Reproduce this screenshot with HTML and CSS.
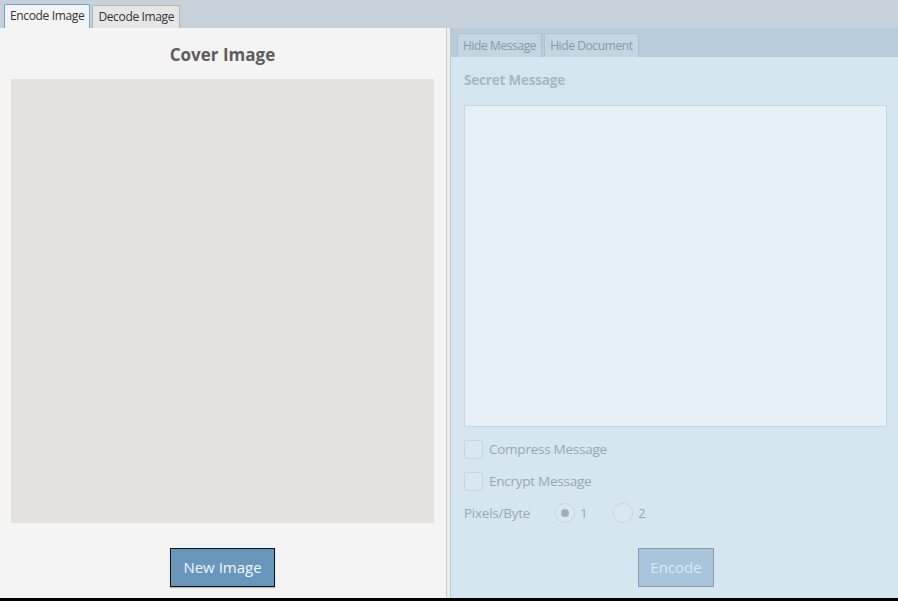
FILE: index.html
```html
<!DOCTYPE html>
<html>
<head>
<meta charset="utf-8">
<link rel="stylesheet" href="styles.css">
</head>
<body>
<div class="app">
  <div class="tabbar">
    <div class="tab tab-active">Encode Image</div>
    <div class="tab">Decode Image</div>
  </div>
  <div class="content">
    <div class="left">
      <div class="title">Cover Image</div>
      <div class="image-area"></div>
      <div class="btn-row">
        <div class="btn btn-primary">New Image</div>
      </div>
    </div>
    <div class="divider"></div>
    <div class="right">
      <div class="subtabbar">
        <div class="subtab">Hide Message</div>
        <div class="subtab">Hide Document</div>
      </div>
      <div class="right-body">
        <div class="label-bold">Secret Message</div>
        <div class="textarea"></div>
        <div class="check-row"><span class="checkbox"></span><span class="muted">Compress Message</span></div>
        <div class="check-row"><span class="checkbox"></span><span class="muted">Encrypt Message</span></div>
        <div class="radio-row">
          <span class="muted pb">Pixels/Byte</span>
          <span class="radio radio-on"><span class="dot"></span></span><span class="muted rlabel">1</span>
          <span class="radio"></span><span class="muted rlabel">2</span>
        </div>
        <div class="btn-row">
          <div class="btn btn-disabled">Encode</div>
        </div>
      </div>
    </div>
  </div>
</div>
</body>
</html>
```

FILE: styles.css
```css
html, body {
  margin: 0;
  padding: 0;
}
body {
  background: #000;
  width: 898px;
  height: 601px;
  overflow: hidden;
  font-family: "Open Sans", "Noto Sans", sans-serif;
}
.app {
  height: 598px;
  display: flex;
  flex-direction: column;
}
.tabbar {
  height: 28px;
  background: #c6d1da;
  display: flex;
  align-items: flex-end;
  padding-left: 4px;
  gap: 2px;
  box-sizing: border-box;
}
.tab {
  height: 23px;
  box-sizing: border-box;
  padding: 0 5px;
  font-size: 12px;
  line-height: 22px;
  color: #333;
  background: #e6e6e6;
  border: 1px solid #b5b5b5;
  border-bottom: none;
  border-radius: 2px 2px 0 0;
  letter-spacing: -0.35px;
}
.tab-active {
  background: #f4f4f4;
  border-color: #5fa7d6;
  height: 24px;
}
.content {
  flex: 1;
  display: flex;
  min-height: 0;
}
.left {
  width: 446px;
  background: #f4f4f4;
  display: flex;
  flex-direction: column;
  padding: 0 12px 11px 11px;
  box-sizing: border-box;
}
.title {
  height: 51px;
  line-height: 53px;
  text-align: center;
  font-weight: bold;
  font-size: 17px;
  color: #5e5e5e;
}
.image-area {
  height: 444px;
  background: #e3e2de;
}
.btn-row {
  display: flex;
  justify-content: center;
  margin-top: 25px;
}
.btn {
  height: 39px;
  box-sizing: border-box;
  font-size: 15px;
  line-height: 37px;
  text-align: center;
}
.btn-primary {
  width: 105px;
  background: #6897bb;
  border: 1px solid #111;
  color: #f2f6fa;
  box-shadow: 0 1px 1px rgba(0,0,0,0.25);
}
.divider {
  width: 5px;
  background: #eeeeee;
  border-left: 1px solid #cacaca;
  border-right: 1px solid #c2c6c9;
  box-sizing: border-box;
}
.right {
  flex: 1;
  background: #d6e6f0;
  display: flex;
  flex-direction: column;
}
.subtabbar {
  height: 29px;
  background: #b7cbda;
  display: flex;
  align-items: flex-end;
  padding-left: 6px;
  gap: 2px;
}
.subtab {
  height: 24px;
  box-sizing: border-box;
  padding: 0 5px;
  font-size: 12px;
  line-height: 23px;
  color: #8a98a4;
  background: #c4d5e2;
  border: 1px solid #adc1d1;
  border-bottom: none;
  border-radius: 2px 2px 0 0;
  letter-spacing: -0.4px;
}
.right-body {
  flex: 1;
  display: flex;
  flex-direction: column;
  padding: 0 11px 0 13px;
}
.label-bold {
  height: 48px;
  line-height: 47px;
  font-weight: bold;
  font-size: 13.5px;
  color: #a9b7c2;
  letter-spacing: -0.2px;
}
.textarea {
  height: 322px;
  box-sizing: border-box;
  background: #e7eff7;
  border: 1px solid #c8d7e3;
}
.check-row {
  display: flex;
  align-items: center;
  height: 20px;
  margin-top: 12px;
  gap: 6px;
}
.check-row:first-of-type {
  margin-top: 13px;
}
.checkbox {
  width: 19px;
  height: 19px;
  box-sizing: border-box;
  background: #dbe7f0;
  border: 1px solid #c6d5e0;
  border-radius: 2px;
}
.muted {
  font-size: 13.5px;
  color: #9aa7b2;
  letter-spacing: -0.25px;
}
.radio-row {
  display: flex;
  align-items: center;
  height: 20px;
  margin-top: 12px;
}
.pb {
  font-size: 13.5px;
  width: 91px;
}
.radio {
  width: 20px;
  height: 20px;
  box-sizing: border-box;
  border-radius: 50%;
  background: #dbe7f0;
  border: 1px solid #c6d5e0;
  display: flex;
  align-items: center;
  justify-content: center;
}
.dot {
  width: 8px;
  height: 8px;
  border-radius: 50%;
  background: #a4aeb6;
}
.rlabel {
  margin-left: 5px;
  width: 33px;
}
.btn-disabled {
  width: 76px;
  background: #a9c5db;
  border: 1px solid #8b9cab;
  color: #dce9f3;
}
.right-body .btn-row {
  margin-top: 25px;
  padding-left: 1px;
}
```
